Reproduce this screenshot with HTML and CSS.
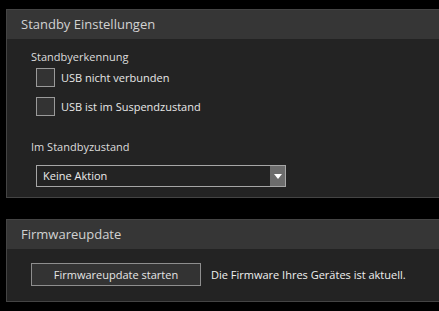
FILE: index.html
```html
<!DOCTYPE html>
<html lang="de">
<head>
  <meta charset="UTF-8">
  <title>Einstellungen</title>
  <link rel="stylesheet" href="styles.css">
</head>
<body>
  <div class="panel standby">
    <div class="panel-header">Standby Einstellungen</div>
    <div class="panel-body">
      <div class="group-label">Standbyerkennung</div>
      <label class="check-row"><span class="checkbox"></span>USB nicht verbunden</label>
      <label class="check-row"><span class="checkbox"></span>USB ist im Suspendzustand</label>
      <div class="group-label state-label">Im Standbyzustand</div>
      <div class="select">
        <span class="select-text">Keine Aktion</span>
        <span class="select-arrow">
          <svg width="8" height="5" viewBox="0 0 8 5"><path d="M0 0 H8 L4 5 Z" fill="#ffffff"/></svg>
        </span>
      </div>
    </div>
  </div>

  <div class="panel firmware">
    <div class="panel-header">Firmwareupdate</div>
    <div class="panel-body fw-row">
      <button class="fw-button">Firmwareupdate starten</button>
      <span class="fw-status">Die Firmware Ihres Gerätes ist aktuell.</span>
    </div>
  </div>
</body>
</html>
```

FILE: styles.css
```css
body {
  margin: 0;
  background-color: #000000;
  font-family: 'Open Sans', 'Noto Sans', sans-serif;
  color: #e6e6e6;
  overflow: hidden;
}

/* Panels */
.panel {
  margin-left: 6px;
  background-color: #232323;
  border: 1px solid #444444;
  border-right: none;
  box-sizing: border-box;
}
.standby {
  margin-top: 9px;
  height: 189px;
}
.firmware {
  margin-top: 21px;
  height: 83px;
}
.panel-header {
  height: 29px;
  background-color: #363636;
  color: #d2d2d2;
  font-size: 13px;
  line-height: 29px;
  padding-left: 14px;
}

/* Standby */
.standby .panel-body {
  padding: 10px 0 0 24px;
}
.group-label {
  font-size: 11px;
  line-height: 16px;
  color: #dcdcdc;
}
.check-row {
  display: flex;
  align-items: center;
  gap: 6px;
  margin-left: 5px;
  margin-top: 2px;
  height: 21px;
  font-size: 11px;
  color: #e8e8e8;
}
.check-row + .check-row {
  margin-top: 8px;
}
.checkbox {
  width: 17px;
  height: 17px;
  border: 1px solid #9a9a9a;
  background-color: #333333;
}
.state-label {
  margin-top: 22px;
}
.select {
  display: flex;
  margin-top: 10px;
  margin-left: 5px;
  width: 250px;
  height: 22px;
  border: 1px solid #a6a6a6;
  box-sizing: border-box;
  background-color: #232323;
}
.select-text {
  flex: 1;
  padding-left: 6px;
  font-size: 11px;
  line-height: 20px;
  color: #ececec;
}
.select-arrow {
  width: 15px;
  background-color: #6c6c6c;
  display: flex;
  align-items: center;
  justify-content: center;
}

/* Firmware */
.fw-row {
  display: flex;
  align-items: center;
  gap: 10px;
  padding: 14px 0 0 24px;
}
.fw-button {
  width: 170px;
  height: 23px;
  background-color: #333333;
  border: 1px solid #8e8e8e;
  color: #e6e6e6;
  font-family: inherit;
  font-size: 11px;
  padding: 0;
}
.fw-status {
  font-size: 11px;
  color: #f0f0f0;
}
```
